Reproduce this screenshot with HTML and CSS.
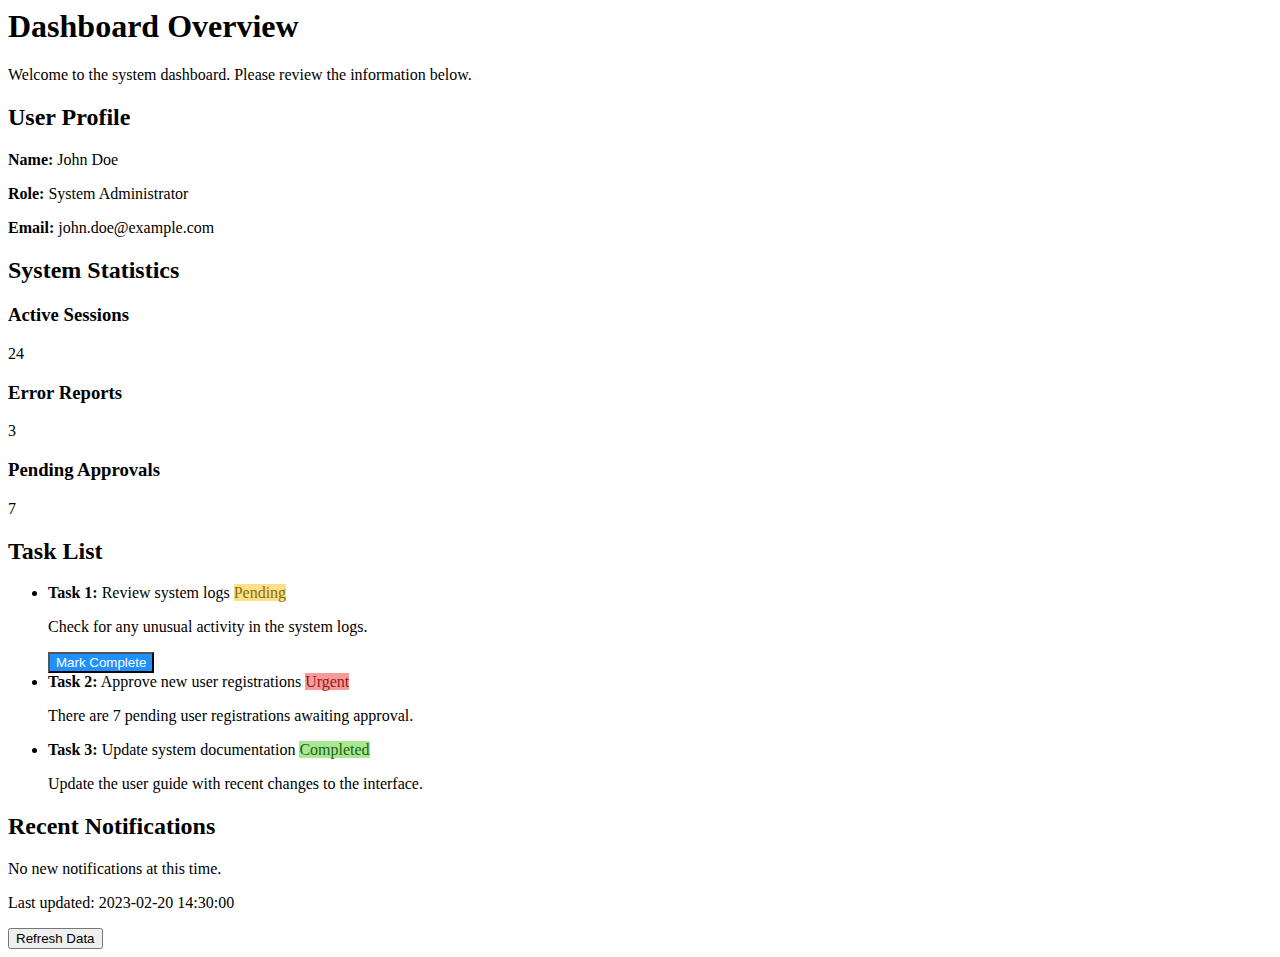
FILE: index.html
```html
<!DOCTYPE html>
<html>
<head>
<meta charset="utf-8">
<title>Dashboard</title>
<link rel="stylesheet" href="styles.css">
</head>
<body>
<h1 class="page-title">Dashboard Overview</h1>
<p>Welcome to the system dashboard. Please review the information below.</p>
<h2>User Profile</h2>
<p><strong>Name:</strong> John Doe</p>
<p><strong>Role:</strong> System Administrator</p>
<p><strong>Email:</strong> john.doe@example.com</p>
<h2>System Statistics</h2>
<h3>Active Sessions</h3>
<p>24</p>
<h3>Error Reports</h3>
<p>3</p>
<h3>Pending Approvals</h3>
<p>7</p>
<h2>Task List</h2>
<ul>
<li><strong>Task 1:</strong> Review system logs <span class="badge pending">Pending</span>
<p>Check for any unusual activity in the system logs.</p>
<button class="btn-primary">Mark Complete</button></li>
<li><strong>Task 2:</strong> Approve new user registrations <span class="badge urgent">Urgent</span>
<p>There are 7 pending user registrations awaiting approval.</p></li>
<li><strong>Task 3:</strong> Update system documentation <span class="badge completed">Completed</span>
<p>Update the user guide with recent changes to the interface.</p></li>
</ul>
<h2>Recent Notifications</h2>
<p>No new notifications at this time.</p>
<p>Last updated: 2023-02-20 14:30:00</p>
<button class="btn">Refresh Data</button>
</body>
</html>
```
FILE: styles.css
```css
body {
  font-family: "Liberation Serif", "Times New Roman", serif;
  margin: 8px;
}
.page-title {
  margin-top: 0;
}
button {
  font-family: "Liberation Sans", Arial, sans-serif;
}
.badge.pending {
  background-color: #ffe08a;
  color: #8a6d00;
}
.badge.urgent {
  background-color: #f99a9a;
  color: #8b1a1a;
}
.badge.completed {
  background-color: #a8e890;
  color: #1f5f1f;
}
.btn-primary {
  background-color: #1e90ff;
  color: #fff;
}
```
